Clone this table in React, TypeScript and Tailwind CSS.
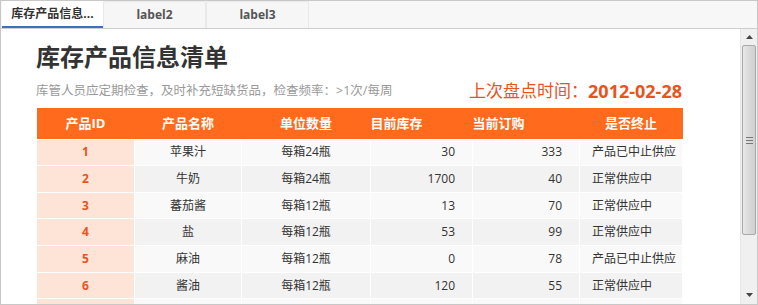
import React from 'react';

interface Product {
  id: number | '';
  name: string;
  unit: string;
  stock: number | '';
  order: number | '';
  status: string;
}

const products: Product[] = [
  { id: 1, name: '苹果汁', unit: '每箱24瓶', stock: 30, order: 333, status: '产品已中止供应' },
  { id: 2, name: '牛奶', unit: '每箱24瓶', stock: 1700, order: 40, status: '正常供应中' },
  { id: 3, name: '蕃茄酱', unit: '每箱12瓶', stock: 13, order: 70, status: '正常供应中' },
  { id: 4, name: '盐', unit: '每箱12瓶', stock: 53, order: 99, status: '正常供应中' },
  { id: 5, name: '麻油', unit: '每箱12瓶', stock: 0, order: 78, status: '产品已中止供应' },
  { id: 6, name: '酱油', unit: '每箱12瓶', stock: 120, order: 55, status: '正常供应中' },
  // next row only peeks in under the fold
  { id: '', name: '', unit: '', stock: '', order: '', status: '' },
];

const tabs = ['库存产品信息...', 'label2', 'label3'];

const Scrollbar: React.FC = () => (
  <div className="flex w-[17px] shrink-0 flex-col border-l border-[#e6e6e6] bg-[#f0f0f0]">
    <div className="flex h-[16px] items-center justify-center">
      <svg width="7" height="4" viewBox="0 0 7 4">
        <path d="M0 4 L3.5 0 L7 4 Z" fill="#444" />
      </svg>
    </div>
    <div className="mx-[1px] flex h-[190px] items-center justify-center rounded-[2px] border border-[#a9a9a9] bg-gradient-to-r from-[#e8e8e8] via-[#dadada] to-[#d0d0d0]">
      <div className="flex flex-col gap-[2px]">
        <div className="h-px w-[7px] bg-[#777]" />
        <div className="h-px w-[7px] bg-[#777]" />
        <div className="h-px w-[7px] bg-[#777]" />
      </div>
    </div>
    <div className="flex-1" />
    <div className="flex h-[18px] items-center justify-center">
      <svg width="7" height="4" viewBox="0 0 7 4">
        <path d="M0 0 L3.5 4 L7 0 Z" fill="#444" />
      </svg>
    </div>
  </div>
);

export default function App() {
  return (
    <div
      className="flex h-[305px] w-[758px] flex-col overflow-hidden border border-[#c8c8c8] bg-white"
      style={{ fontFamily: '"Open Sans", "Noto Sans CJK SC", sans-serif' }}
    >
      <div className="flex h-[28px] shrink-0 items-end border-b border-[#cfcfcf] bg-[#f7f7f7] pl-[1px]">
        {tabs.map((t, i) => (
          <div
            key={t}
            className={
              i === 0
                ? 'flex h-[27px] w-[101px] items-center justify-center rounded-t-[3px] border-b-2 border-[#3f6fb8] bg-white text-[12px] font-bold text-[#333]'
                : 'flex h-[27px] w-[103px] items-center justify-center rounded-t-[3px] border-x border-t border-[#e9e9e9] bg-[#f6f6f6] text-[12px] font-bold text-[#555]'
            }
          >
            {t}
          </div>
        ))}
      </div>

      <div className="flex min-h-0 flex-1">
        <div className="min-w-0 flex-1 overflow-hidden pl-[35px] pt-[12px]">
          <h1 className="text-[24px] font-bold leading-[32px] text-[#333]">库存产品信息清单</h1>
          <div className="mt-[6px] flex h-[24px] w-[646px] items-center justify-between">
            <span className="text-[12.5px] text-[#999]">库管人员应定期检查，及时补充短缺货品，检查频率：&gt;1次/每周</span>
            <span className="flex items-center text-[#e8541e]">
              <span className="text-[17px]">上次盘点时间：</span>
              <span className="text-[18px] font-bold">2012-02-28</span>
            </span>
          </div>

          <table className="mt-[5px] w-[646px] table-fixed border-collapse text-[12px]">
            <colgroup>
              <col className="w-[98px]" />
              <col className="w-[107px]" />
              <col className="w-[129px]" />
              <col className="w-[102px]" />
              <col className="w-[107px]" />
              <col className="w-[103px]" />
            </colgroup>
            <thead>
              <tr className="h-[31px] bg-[#ff6a1c] text-[13px] font-bold text-white">
                <th className="text-center">产品ID</th>
                <th className="text-center">产品名称</th>
                <th className="text-center">单位数量</th>
                <th className="text-left font-bold">目前库存</th>
                <th className="text-left font-bold">当前订购</th>
                <th className="text-center">是否终止</th>
              </tr>
            </thead>
            <tbody>
              {products.map((p, i) => (
                <tr
                  key={i}
                  className={`h-[26.67px] text-[#333] ${i % 2 === 0 ? 'bg-[#f9f9f9]' : 'bg-[#f2f2f2]'}`}
                >
                  <td className="border border-white bg-[#fde4d6] text-center font-bold text-[#e8541e]">{p.id}</td>
                  <td className="border border-white text-center">{p.name}</td>
                  <td className="border border-white text-center">{p.unit}</td>
                  <td className="border border-white pr-[17px] text-right">{p.stock}</td>
                  <td className="border border-white pr-[17px] text-right">{p.order}</td>
                  <td className="border border-white pl-[12px] text-left">{p.status}</td>
                </tr>
              ))}
            </tbody>
          </table>
        </div>
        <Scrollbar />
      </div>
    </div>
  );
}
